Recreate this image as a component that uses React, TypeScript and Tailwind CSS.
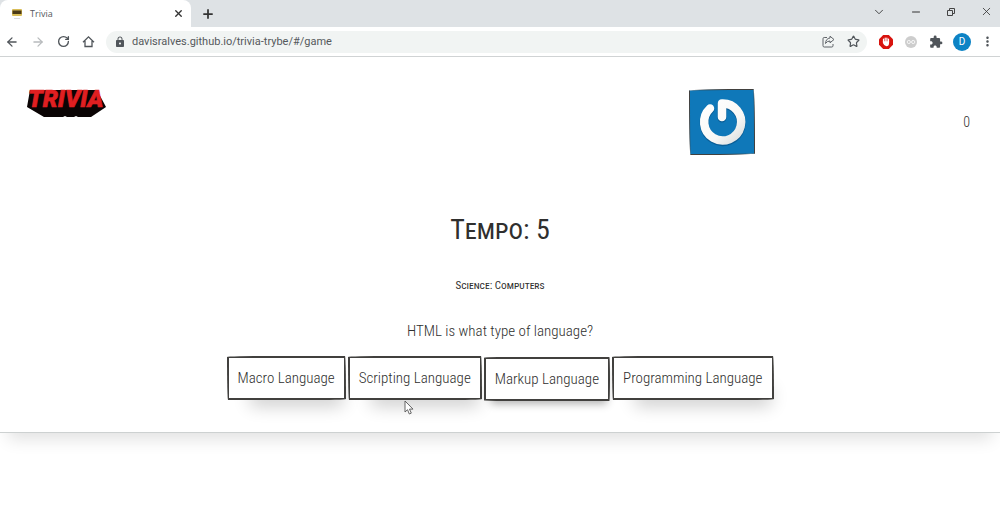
import { ArrowLeft, ArrowRight, RotateCw, Star, ChevronDown, Minus, X, Plus } from "lucide-react";
import { MdLock, MdExtension, MdMoreVert } from "react-icons/md";

const answers = [
  {
    label: "Macro Language",
    style:
      "rounded-[170px_4px_150px_4px/4px_150px_4px_170px] shadow-[10px_19px_17px_-13px_rgba(0,0,0,0.2)]",
  },
  {
    label: "Scripting Language",
    style:
      "rounded-[170px_4px_150px_4px/4px_150px_4px_170px] shadow-[10px_19px_17px_-13px_rgba(0,0,0,0.2)]",
  },
  {
    label: "Markup Language",
    style:
      "translate-y-px rounded-[85px_4px_4px_125px/4px_135px_135px_4px] shadow-[2px_8px_8px_-5px_rgba(0,0,0,0.3)]",
  },
  {
    label: "Programming Language",
    style:
      "rounded-[170px_4px_150px_4px/4px_150px_4px_170px] shadow-[10px_19px_17px_-13px_rgba(0,0,0,0.2)]",
  },
];

function Favicon() {
  return (
    <svg width="12" height="12" viewBox="0 0 12 12" aria-hidden="true">
      <rect x="1" y="1" width="10" height="7" rx="1" fill="#d9bd58" />
      <rect x="1.5" y="2.5" width="9" height="3.5" fill="#4b3a16" />
      <path d="M3 10.5h6" stroke="#dcdcdc" />
    </svg>
  );
}

function TriviaLogo() {
  return (
    <svg width="84" height="38" viewBox="0 -8 84 38" role="img" aria-label="Trivia">
      <path d="M3 1h67l9 17-15 10H51l-2-1-2 1h-7l-2-1-2 1H17L0 18z" fill="#0a0404" />
      <text
        x="1"
        y="18"
        fontFamily="Roboto, sans-serif"
        fontSize="24"
        fontWeight="900"
        fontStyle="italic"
        fill="#e01f21"
        stroke="#e01f21"
        strokeWidth="0.6"
      >
        TRIVIA
      </text>
    </svg>
  );
}

function Avatar() {
  return (
    <div className="size-[66px] overflow-hidden rounded-[170px_4px_150px_4px/4px_150px_4px_170px] border border-[#41403e] bg-[#0f78b9]">
      <svg width="64" height="64" viewBox="0 0 64 64" role="img" aria-label="Avatar">
        <defs>
          <linearGradient id="power" gradientUnits="userSpaceOnUse" x1="14" y1="12" x2="50" y2="52">
            <stop offset="0" stopColor="#ffffff" />
            <stop offset="0.65" stopColor="#f8f8f6" />
            <stop offset="1" stopColor="#d9dedf" />
          </linearGradient>
        </defs>
        <g fill="none" strokeLinecap="round" strokeLinejoin="round">
          <path d="M20 18.500A18.500 18.500 0 1 0 32 13.500V27" transform="translate(0 1)" stroke="#0a5e97" strokeWidth="9" />
          <path d="M20 18.500A18.500 18.500 0 1 0 32 13.500V27" stroke="url(#power)" strokeWidth="8.500" />
        </g>
      </svg>
    </div>
  );
}

function ShareIcon() {
  return (
    <svg width="13" height="13" viewBox="0 0 13 13" fill="none" stroke="#5f6368" strokeLinejoin="round" aria-hidden="true">
      <path d="M5 2.5H2.2Q1 2.5 1 3.7v7Q1 12 2.2 12h7.6q1.200 0 1.200-1.200V9" />
      <path d="M8 1.200 12 4.500 8 7.800V6Q5 6 3.500 8.500 3.800 3.500 8 3z" />
    </svg>
  );
}

function BlockerIcon() {
  return (
    <svg width="14" height="14" viewBox="0 0 14 14" aria-hidden="true">
      <path d="M4.200 0h5.600L14 4.200v5.600L9.800 14H4.200L0 9.800V4.200z" fill="#d8130e" />
      <path
        d="M4.500 7V4M6.200 6.500V3M7.900 6.500V3M9.500 7V4.200"
        stroke="#fff"
        strokeWidth="1.200"
        strokeLinecap="round"
      />
      <path d="M3.900 6.200h6.200v1.500q0 3.500-2.800 3.500Q5.200 11.200 3.900 8z" fill="#fff" />
    </svg>
  );
}

function GlassesIcon() {
  return (
    <svg width="12" height="12" viewBox="0 0 12 12" aria-hidden="true">
      <circle cx="6" cy="6" r="6" fill="#cdcdcd" />
      <g fill="none" stroke="#f7f7f7">
        <circle cx="3.800" cy="6" r="1.600" />
        <circle cx="8.200" cy="6" r="1.600" />
      </g>
    </svg>
  );
}

function RestoreIcon() {
  return (
    <svg width="10" height="10" viewBox="0 0 10 10" fill="none" stroke="#444" aria-hidden="true">
      <path d="M1.500 3.500h5v5h-5zM3.500 3.500v-2h5v5h-2" />
    </svg>
  );
}

function Cursor() {
  return (
    <svg className="absolute -bottom-[15px] left-[56px]" width="10" height="15" viewBox="0 0 10 15" aria-hidden="true">
      <path d="M1 1v11l2.500-2.300L5.300 14l2-.9-1.800-4H9z" fill="#fff" stroke="#555" strokeWidth="0.900" />
    </svg>
  );
}

function TabStrip() {
  return (
    <div className="flex h-[27px] items-center justify-between bg-[#dee2e5]">
      <div className="flex h-full items-center">
        <div className="flex h-full w-[191px] items-center rounded-t-lg bg-white pr-[7px] pl-[11px]">
          <Favicon />
          <span className="ml-[7px] grow text-[9px] text-[#55595d]">Trivia</span>
          <button type="button" aria-label="Close tab" className="text-[#333]">
            <X size={11} strokeWidth={3} />
          </button>
        </div>
        <button type="button" aria-label="New tab" className="ml-2.5 text-[#333]">
          <Plus size={14} strokeWidth={3} />
        </button>
      </div>
      <div className="flex items-center gap-6 pr-[7px] pb-1 text-[#333]">
        <button type="button" aria-label="Search tabs">
          <ChevronDown size={14} strokeWidth={1.5} />
        </button>
        <button type="button" aria-label="Minimize">
          <Minus size={12} strokeWidth={2} />
        </button>
        <button type="button" aria-label="Restore">
          <RestoreIcon />
        </button>
        <button type="button" aria-label="Close window">
          <X size={13} strokeWidth={1.5} />
        </button>
      </div>
    </div>
  );
}

function Toolbar() {
  return (
    <div className="flex h-[30px] items-center border-b border-[#d0d3d4] bg-white pr-[5px] pl-[5px] text-[#50555a]">
      <div className="flex items-center gap-3">
        <button type="button" aria-label="Back">
          <ArrowLeft size={14} strokeWidth={2.2} />
        </button>
        <button type="button" aria-label="Forward" className="text-[#b8bbbd]">
          <ArrowRight size={14} strokeWidth={2.2} />
        </button>
        <button type="button" aria-label="Reload">
          <RotateCw size={13} strokeWidth={2.5} />
        </button>
        <button type="button" aria-label="Home">
          <svg width="13" height="13" viewBox="0 0 13 13" fill="none" stroke="currentColor" strokeWidth="1.300" aria-hidden="true">
            <path d="M1 7.200 6.500 1.800 12 7.200M3 6v5.500h7V6" />
          </svg>
        </button>
      </div>
      <div className="ml-[11px] flex h-[22px] grow items-center rounded-full bg-[#f1f4f3] pr-[7px] pl-2">
        <MdLock size={12} />
        <div className="relative ml-[6px] h-5 min-w-0 grow text-[11px] leading-5">
          <input
            aria-label="Address"
            type="text"
            readOnly
            value="davisralves.github.io/trivia-trybe/#/game"
            className="h-5 w-full bg-transparent text-[#55595c] outline-none"
          />
        </div>
        <button type="button" aria-label="Share">
          <ShareIcon />
        </button>
        <button type="button" aria-label="Bookmark" className="ml-3">
          <Star size={13} strokeWidth={2.2} />
        </button>
      </div>
      <div className="ml-3 flex items-center gap-3">
        <button type="button" aria-label="Ad blocker">
          <BlockerIcon />
        </button>
        <button type="button" aria-label="Reader">
          <GlassesIcon />
        </button>
        <button type="button" aria-label="Extensions">
          <MdExtension size={14} />
        </button>
      </div>
      <button
        type="button"
        aria-label="Profile"
        className="ml-[10px] size-[18px] rounded-full bg-[#0d83c5] text-[10px] leading-[18px] text-white"
      >
        D
      </button>
      <button type="button" aria-label="Menu" className="ml-[9px]">
        <MdMoreVert size={15} />
      </button>
    </div>
  );
}

export default function App() {
  return (
    <div className="min-h-screen overflow-hidden bg-white font-['Open_Sans',sans-serif]">
      <TabStrip />
      <div className="font-['Roboto',sans-serif]">
        <Toolbar />
      </div>
      <main className="border-b border-[#cdd1d1] pb-8 font-['Roboto_Condensed','Liberation_Sans_Narrow',sans-serif] font-light text-[#2f2f2e] shadow-[0_14px_16px_-8px_rgba(0,0,0,0.12)]">
        <header className="flex items-start justify-between pt-6 pr-[30px] pl-[27px]">
          <TriviaLogo />
          <div className="flex items-start gap-52 pt-2">
            <Avatar />
            <p className="mt-[23px] text-sm leading-5">0</p>
          </div>
        </header>
        <section className="flex flex-col items-center">
          <h1 className="mt-[55px] text-[28px] leading-10 font-normal [font-variant-caps:small-caps]">Tempo: 5</h1>
          <h2 className="mt-[26px] text-[11px] leading-5 font-normal [font-variant-caps:small-caps]">Science: Computers</h2>
          <p className="mt-[23px] text-[15px] leading-6">HTML is what type of language?</p>
          <div className="mt-[13px] flex gap-0.5">
            {answers.map((answer, index) => (
              <div key={answer.label} className="relative">
                <button
                  type="button"
                  className={`h-11 border-2 border-[#41403e] bg-white px-[9px] text-[15px] whitespace-nowrap ${answer.style}`}
                >
                  {answer.label}
                </button>
                {index === 1 && <Cursor />}
              </div>
            ))}
          </div>
        </section>
      </main>
    </div>
  );
}
